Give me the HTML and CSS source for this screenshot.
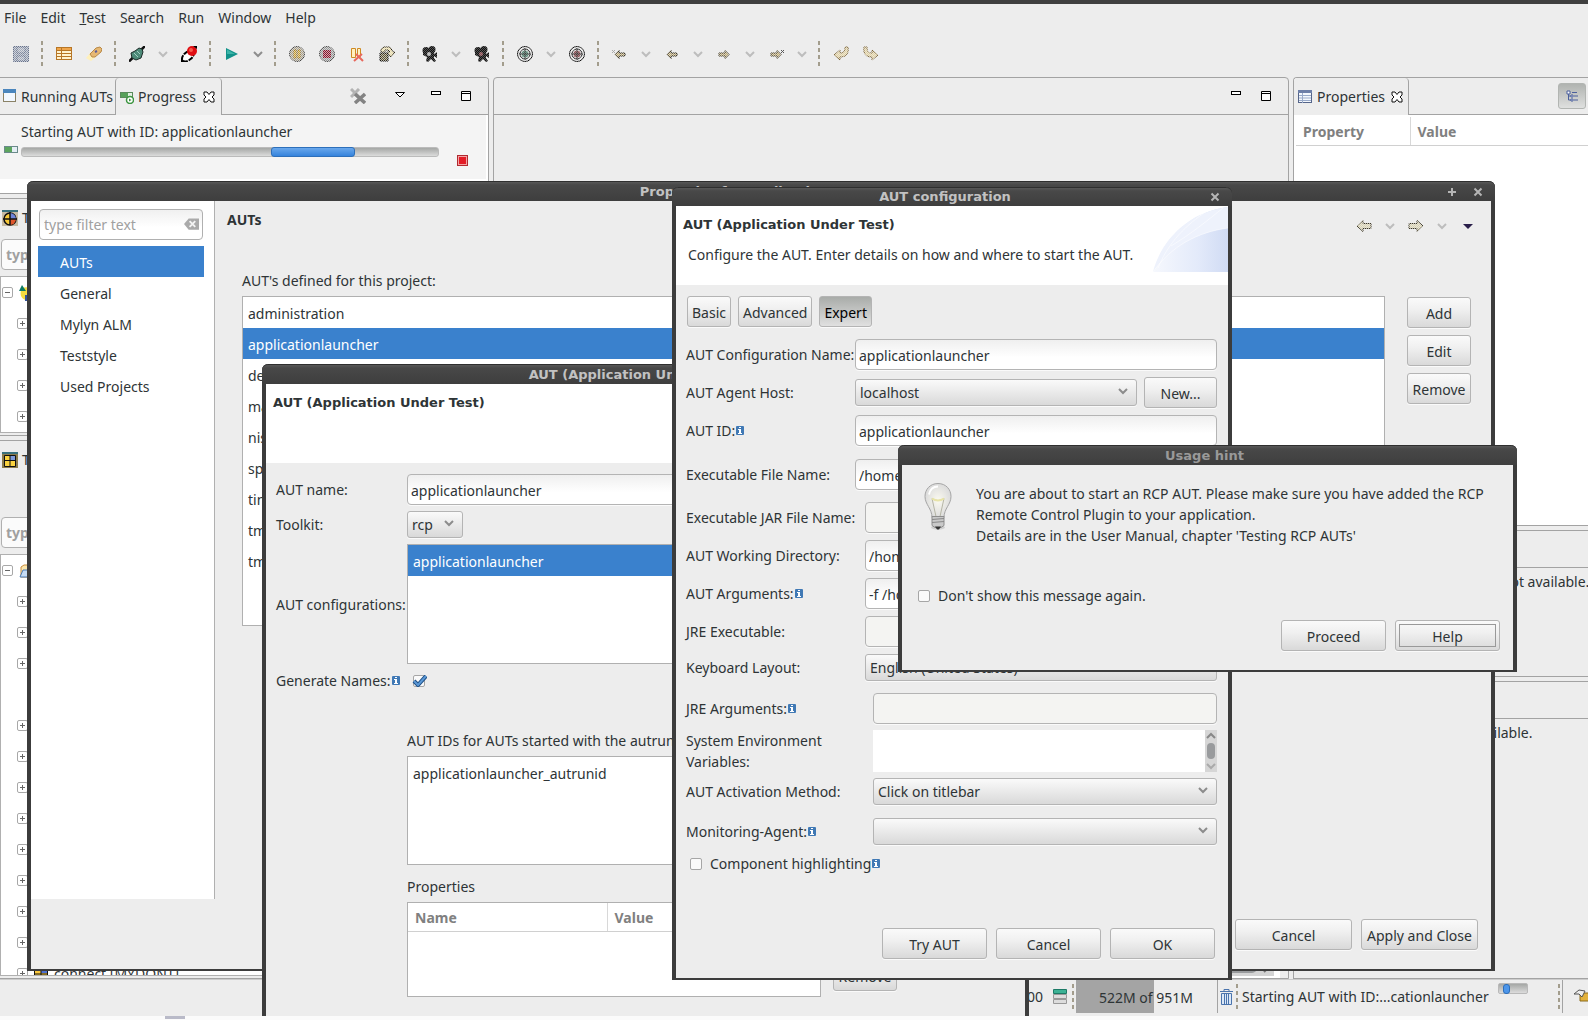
FILE: index.html
```html
<!DOCTYPE html>
<html lang="en">
<head>
<meta charset="utf-8">
<title>Test Workbench</title>
<link rel="stylesheet" href="styles.css">
</head>
<body>
<svg class="defs" aria-hidden="true">
  <symbol id="chev" viewBox="0 0 10 7"><path d="M1 1l4 4 4-4" fill="none" stroke="currentColor" stroke-width="2"/></symbol>
  <symbol id="info" viewBox="0 0 8 9"><rect width="8" height="9" rx="1" fill="#4079b5"/><path d="M3 1h2v1H3zM2 3h3v4h1v1H2V7h1V4H2z" fill="#fff"/></symbol>
  <symbol id="closetab" viewBox="0 0 12 12"><path d="M1 1h3l2 2.500 2-2.500h3v3L9 6l2 2v3H8L6 8.500 4 11H1V8l2-2-2-2z" fill="#fff" stroke="#111"/></symbol>
  <symbol id="minimize" viewBox="0 0 12 12"><rect x="1.500" y="1.500" width="9" height="3" fill="#fff" stroke="#000"/></symbol>
  <symbol id="maximize" viewBox="0 0 12 12"><path d="M1.500 1.500h9v9h-9zM1 3.500h10" fill="#fff" stroke="#000"/></symbol>
  <symbol id="plus" viewBox="0 0 11 11"><rect x=".5" y=".5" width="10" height="10" rx="1.500" fill="#fff" stroke="#a8a8a8"/><path d="M3 5.500h5M5.500 3v5" stroke="#666"/></symbol>
  <symbol id="minus" viewBox="0 0 11 11"><rect x=".5" y=".5" width="10" height="10" rx="1.500" fill="#fff" stroke="#a8a8a8"/><path d="M3 5.500h5" stroke="#666"/></symbol>
  <symbol id="arrowl" viewBox="0 0 16 16"><path d="M1 8l6-5.500v3h8v5H7v3z" fill="#d9d2b0" stroke="#3c3724"/></symbol>
  <symbol id="arrowr" viewBox="0 0 16 16"><path d="M15 8L9 2.500v3H1v5h8v3z" fill="#d9d2b0" stroke="#3c3724"/></symbol>
  <symbol id="sarrowl" viewBox="0 0 16 16"><path d="M3 8.500l4-4v2.500h6v3H7v2.500z" fill="#b9a46c" stroke="#1e1a0e"/></symbol>
  <symbol id="sarrowr" viewBox="0 0 16 16"><path d="M13 8.500l-4-4v2.500H3v3h6v2.500z" fill="#b9a46c" stroke="#3c3420"/></symbol>
  <symbol id="camera" viewBox="0 0 16 16"><circle cx="4" cy="4.500" r="3.500" fill="#111"/><circle cx="10" cy="3.500" r="3.500" fill="#111"/><path d="M1 6h11v2l3-2v6l-3-2v2l2 3-2 1-3-3-3 3-2-1 1-4-4-2z" fill="#111"/><circle cx="7" cy="8" r="2" fill="currentColor"/></symbol>
  <symbol id="target" viewBox="0 0 16 16"><g fill="none" stroke="#111"><circle cx="8" cy="8" r="7.500"/><circle cx="8" cy="8" r="5"/></g><circle cx="8" cy="8" r="3.500" fill="currentColor"/><path d="M8 2v12M2 8h12" stroke="#333"/></symbol>
  <symbol id="wclose" viewBox="0 0 10 10"><path d="M1.500 1.500l7 7M8.500 1.500l-7 7" stroke="#b5b5b5" stroke-width="2"/></symbol>
</svg>

<div class="desktop">
  <div class="app-edge"></div>
  <nav class="menubar">
    <a href="#">File</a><a href="#">Edit</a><a href="#"><u>T</u>est</a><a href="#">Search</a><a href="#">Run</a><a href="#">Window</a><a href="#">Help</a>
  </nav>
  <div class="toolbar">
    <button class="tool dither" aria-label="Save"><svg viewBox="0 0 16 16"><path d="M.5.500h15v15H.5z" fill="#8f99ad" stroke="#67738d"/><path d="M4 1h8v6H4zM4 10h8v5H4z" fill="#a3abbb" stroke="#67738d"/></svg></button>
    <i class="sep"></i>
    <button class="tool" aria-label="Table"><svg viewBox="0 0 16 16"><rect x=".5" y="1.500" width="15" height="12" fill="#fff3cf" stroke="#b77626"/><path d="M1 2h14v2H1z" fill="#f0a54a"/><path d="M1 4.500h14M1 7.500h14M1 10.500h14M5.500 2v11" stroke="#b77626"/></svg></button>
    <button class="tool" aria-label="Search"><svg viewBox="0 0 16 16"><path d="M0 12l5-6 5 5-5 4z" fill="#fff0ba"/><path d="M4 8l6-6 4-1 2 2-1 3-6 5H6z" fill="#e6b873" stroke="#b98947"/><path d="M9 6l2-1" stroke="#5b5b9a" stroke-width="2"/></svg></button>
    <i class="sep"></i>
    <button class="tool" aria-label="Connect"><svg viewBox="0 0 16 16"><path d="M0 15.500l4-4M12 4l4-4" stroke="#111" stroke-width="2.500"/><path d="M2 7l4-2 4-3 3 1 1 3-2 6-5 2-4-2z" fill="#4d8a78" stroke="#1d2b28"/><path d="M5 7l4 4M8 5l3 3" stroke="#a2cfc2"/></svg></button>
    <button class="drop" aria-label="Connect options"><svg viewBox="0 0 10 7"><use href="#chev"/></svg></button>
    <button class="tool" aria-label="Record"><svg viewBox="0 0 16 16"><ellipse cx="7" cy="10" rx="7" ry="4" transform="rotate(-40 7 10)" fill="#fff" stroke="#000" stroke-width="2" stroke-dasharray="5 1"/><circle cx="11" cy="5" r="5" fill="#e00d12"/><circle cx="10" cy="4" r="2" fill="#f65a4c"/><path d="M12 0h4v3zM0 12v4h4z" fill="#000"/></svg></button>
    <i class="sep"></i>
    <button class="tool" aria-label="Start"><svg viewBox="0 0 16 16"><path d="M2 2l12 6-12 6z" fill="#12928a"/><path d="M3 3.500L11 8H3z" fill="#3db5a8"/></svg></button>
    <button class="drop on" aria-label="Start options"><svg viewBox="0 0 10 7"><use href="#chev"/></svg></button>
    <i class="sep"></i>
    <button class="tool dither" aria-label="Pause"><svg viewBox="0 0 16 16"><circle cx="8" cy="8" r="7.500" fill="#a9a18c" stroke="#444"/><path d="M5 4h2v8H5zM9 4h2v8H9z" fill="#f3c33c" stroke="#9a7112"/></svg></button>
    <button class="tool dither" aria-label="Stop"><svg viewBox="0 0 16 16"><circle cx="8" cy="8" r="7.500" fill="#999" stroke="#444"/><rect x="4" y="4" width="8" height="8" fill="#8a1029"/></svg></button>
    <button class="tool" aria-label="Pause on error"><svg viewBox="0 0 16 16"><path d="M2.500 2.500h4v9h-4zM8.500 2.500h3v8h-3z" fill="#fff0c0" stroke="#cf8a22"/><path d="M5 15l8-7M7 8l7 7" stroke="#e8685d" stroke-width="2"/></svg></button>
    <button class="tool dither" aria-label="Import"><svg viewBox="0 0 16 16"><path d="M1 7h8v8H1z" fill="#5d5230" stroke="#000"/><path d="M2 6V3l3-2h6l3 5h2l-4 5-4-5h3L9 4H6v2z" fill="#eee0a8" stroke="#2c2512"/></svg></button>
    <i class="sep"></i>
    <button class="tool dither-soft cam-a" aria-label="Observe"><svg><use href="#camera"/></svg></button>
    <button class="drop" aria-label="Observe options"><svg viewBox="0 0 10 7"><use href="#chev"/></svg></button>
    <button class="tool dither-soft cam-b" aria-label="Stop observing"><svg><use href="#camera"/></svg></button>
    <i class="sep"></i>
    <button class="tool dither-soft cam-c" aria-label="Map"><svg><use href="#target"/></svg></button>
    <button class="drop" aria-label="Map options"><svg viewBox="0 0 10 7"><use href="#chev"/></svg></button>
    <button class="tool dither-soft cam-b" aria-label="Stop mapping"><svg><use href="#target"/></svg></button>
    <i class="sep"></i>
    <button class="tool dither" aria-label="Last edit"><svg viewBox="0 0 16 16"><use href="#sarrowl"/><path d="M0 4l3 3M3 4L0 7" stroke="#111"/></svg></button>
    <button class="drop" aria-label="More"><svg viewBox="0 0 10 7"><use href="#chev"/></svg></button>
    <button class="tool dither" aria-label="Back"><svg><use href="#sarrowl"/></svg></button>
    <button class="drop" aria-label="Back history"><svg viewBox="0 0 10 7"><use href="#chev"/></svg></button>
    <button class="tool dither" aria-label="Forward"><svg><use href="#sarrowr"/></svg></button>
    <button class="drop" aria-label="Forward history"><svg viewBox="0 0 10 7"><use href="#chev"/></svg></button>
    <button class="tool dither" aria-label="Next edit"><svg viewBox="0 0 16 16"><use href="#sarrowr"/><path d="M13 4l3 3M16 4l-3 3" stroke="#555"/></svg></button>
    <button class="drop" aria-label="More"><svg viewBox="0 0 10 7"><use href="#chev"/></svg></button>
    <i class="sep"></i>
    <button class="tool dither" aria-label="Undo"><svg viewBox="0 0 16 16"><path d="M1 9l6-5v3c4 0 5-2 5-6h3c1 7-2 10-8 10v3z" fill="#e3d2a0" stroke="#7a6235"/></svg></button>
    <button class="tool dither" aria-label="Redo"><svg viewBox="0 0 16 16"><path d="M15 9L9 4v3C5 7 4 5 4 1H1c-1 7 2 10 8 10v3z" fill="#e3d2a0" stroke="#7a6235"/></svg></button>
  </div>

  <main class="workbench">
    <div class="col left">
      <section class="panel p-progress">
        <header class="tabs">
          <button class="tab"><svg viewBox="0 0 14 14"><rect x=".5" y=".5" width="12" height="12" fill="#f2f8ff" stroke="#8b8266"/><path d="M0 0h13v4H0z" fill="#4b86bd"/></svg>Running AUTs</button>
          <button class="tab active"><svg viewBox="0 0 14 14"><rect x=".5" y="2.500" width="12" height="5" fill="#e2f0e2" stroke="#5a8a5c"/><path d="M1 3h7v4H1z" fill="#57a05a"/><circle cx="10" cy="10" r="3.500" fill="#fff" stroke="#3c9440" stroke-width="1.500"/><path d="M9 8.500v3l2.500-1.500z" fill="#3c9440"/></svg>Progress<svg class="x" viewBox="0 0 12 12"><use href="#closetab"/></svg></button>
          <div class="tab-tools">
            <svg class="t16" viewBox="0 0 16 16"><path d="M1 1l8 8M9 1L1 9" stroke="#b3b3b3" stroke-width="3"/><path d="M5 6l10 9M15 6L5 15" stroke="#838383" stroke-width="3.500"/></svg>
            <svg class="t12" viewBox="0 0 12 12"><path d="M1.500 2.500h9L6 7z" fill="#fff" stroke="#000"/></svg>
            <svg class="t12"><use href="#minimize"/></svg>
            <svg class="t12"><use href="#maximize"/></svg>
          </div>
        </header>
        <div class="job">
          <svg class="job-icon" viewBox="0 0 14 7"><rect x=".5" y=".5" width="13" height="6" fill="#e4eef4" stroke="#6a8a8a"/><path d="M1 1h7v5H1z" fill="#5ca55e"/></svg>
          <div class="job-main">
            <div class="job-name">Starting AUT with ID: applicationlauncher</div>
            <div class="meter"><i></i></div>
          </div>
          <button class="job-stop" aria-label="Stop job"></button>
        </div>
      </section>
      <section class="panel p-suites">
        <header class="tabs plain"><svg viewBox="0 0 16 16"><path d="M0 0h16v16H0z" fill="#c7bba4"/><path d="M0 0h16v2H0z" fill="#39707c"/><circle cx="8" cy="9" r="6" fill="#f7c93a" stroke="#111" stroke-width="1.500"/><path d="M8 3a6 6 0 0 1 6 6H8z" fill="#6f84d8"/><path d="M8 15a6 6 0 0 0 6-6H8z" fill="#e0572c"/><path d="M8 2v13M1 9h14" stroke="#111" stroke-width="1.500"/></svg>Test Suite Browser</header>
        <input class="filter" type="text" placeholder="type filter text" aria-label="Filter test suites">
        <ul class="tree">
          <li class="root"><svg class="pm"><use href="#minus"/></svg><svg class="t16" viewBox="0 0 16 16"><path d="M4 3c6-2 10 0 10 6 0 4-3 6-6 6-5-1-7-6-4-12z" fill="#f6dd41"/><path d="M1 6l3-6 4 6z" fill="#0c7a64"/><path d="M7 10h9v6H7z" fill="#35549b"/></svg></li>
          <li><svg class="pm"><use href="#plus"/></svg></li><li><svg class="pm"><use href="#plus"/></svg></li><li><svg class="pm"><use href="#plus"/></svg></li><li><svg class="pm"><use href="#plus"/></svg></li>
        </ul>
      </section>
      <section class="panel p-cases">
        <header class="tabs plain"><svg viewBox="0 0 16 16"><path d="M0 0h16v16H0z" fill="#8b7c4c"/><path d="M0 0h16v2H0z" fill="#39707c"/><path d="M2.500 3.500h11v11h-11z" fill="#fbd33f" stroke="#111"/><path d="M8 4h5v4H8z" fill="#7d9ad9"/><path d="M8 3v12M2 8.500h12" stroke="#111"/></svg>Test Case Browser</header>
        <input class="filter" type="text" placeholder="type filter text" aria-label="Filter test cases">
        <ul class="tree">
          <li class="root"><svg class="pm"><use href="#minus"/></svg><svg class="t16" viewBox="0 0 16 16"><path d="M3 4l3-2h8v12H3z" fill="#fce7ae" stroke="#c98d3d"/><path d="M2 14l3-7h11l-3 7z" fill="#c6dcf5" stroke="#4c7cb8"/></svg></li>
          <li><svg class="pm"><use href="#plus"/></svg></li><li><svg class="pm"><use href="#plus"/></svg></li><li><svg class="pm"><use href="#plus"/></svg></li><li></li>
          <li><svg class="pm"><use href="#plus"/></svg></li><li><svg class="pm"><use href="#plus"/></svg></li><li><svg class="pm"><use href="#plus"/></svg></li><li><svg class="pm"><use href="#plus"/></svg></li>
          <li><svg class="pm"><use href="#plus"/></svg></li><li><svg class="pm"><use href="#plus"/></svg></li><li><svg class="pm"><use href="#plus"/></svg></li><li><svg class="pm"><use href="#plus"/></svg></li>
          <li><svg class="pm"><use href="#plus"/></svg><svg class="t16" viewBox="0 0 16 16"><path d="M1.500 1.500h13v13h-13z" fill="#fbc93f" stroke="#111"/><path d="M8 2h6v5H8z" fill="#4c6fd0"/><path d="M8 1v14M1 8h14" stroke="#111"/></svg>connect [MYDONT]</li>
        </ul>
      </section>
    </div>

    <section class="panel editor">
      <header class="tabs"><div class="tab-tools"><svg class="t12"><use href="#minimize"/></svg><svg class="t12"><use href="#maximize"/></svg></div></header>
      <div class="editor-body"></div>
      <div class="hscroll"><i></i><svg viewBox="0 0 7 10"><path d="M1 1l4 4-4 4" fill="none" stroke="#777" stroke-width="2"/></svg></div>
    </section>

    <div class="col right">
      <section class="panel p-props">
        <header class="tabs">
          <button class="tab active"><svg viewBox="0 0 14 14"><rect x=".5" y=".5" width="13" height="12" fill="#f4f8fd" stroke="#55658a"/><path d="M0 0h14v3H0z" fill="#6d7fa8"/><path d="M4.500 3v10M1 5.500h12M1 8h12M1 10.500h12" stroke="#9aabca"/></svg>Properties<svg class="x" viewBox="0 0 12 12"><use href="#closetab"/></svg></button>
          <div class="tab-tools"><button class="toggle" aria-label="Show categories"><svg viewBox="0 0 12 12"><path d="M1 1h3v3H1zM5 5h2v2H5zM5 9h2v2H5z" fill="#fff" stroke="#4a5f9c"/><path d="M2.500 4v6H5M2.500 6H5M6 2.500h5M8 6h4M8 10h4" fill="none" stroke="#4a5f9c"/></svg></button></div>
        </header>
        <table class="grid"><thead><tr><th class="c-prop">Property</th><th>Value</th></tr></thead></table>
      </section>
      <section class="panel p-outline"><header class="tabs"></header><p>An outline is not available.</p></section>
      <section class="panel p-image"><header class="tabs"></header><p>An image is not available.</p></section>
    </div>
  </main>

  <footer class="status">
    <span class="grow">GEN 00</span>
    <svg class="s-bars" viewBox="0 0 14 15"><path d="M.5.500h13v4H.5z" fill="#3cb295" stroke="#1d7a66"/><path d="M.5 5.500h13v4H.5zM.5 10.500h13v4H.5z" fill="#ddd" stroke="#999"/></svg>
    <i class="sep"></i>
    <span class="heap">522M of 951M</span>
    <button class="trash" aria-label="Run garbage collector"><svg viewBox="0 0 13 16"><path d="M0 2.500h13M4 2V.5h5V2" fill="none" stroke="#4a74ad"/><path d="M1.500 4.500h10v11h-10z" fill="#dbe8f7" stroke="#4a74ad"/><path d="M4.500 5v10M6.500 5v10M8.500 5v10" stroke="#4a74ad"/></svg></button>
    <i class="sep"></i>
    <span class="s-job">Starting AUT with ID:...cationlauncher</span>
    <div class="mini"><i></i></div>
    <i class="sep far"></i>
    <button class="s-end" aria-label="Show progress"><svg viewBox="0 0 16 16"><path d="M7 7h9v8H7z" fill="#e2b13c" stroke="#8a6a1c"/><path d="M1 8l5-4 6 1-3 6-3-3z" fill="#eee" stroke="#555"/></svg></button>
  </footer>

  <!-- Project properties -->
  <section class="win w-props">
    <header class="titlebar"><span>Properties for application</span>
      <button class="wbtn" aria-label="Maximize"><svg viewBox="0 0 10 10"><path d="M5 1v8M1 5h8" stroke="#b5b5b5" stroke-width="2"/></svg></button>
      <button class="wbtn" aria-label="Close"><svg><use href="#wclose"/></svg></button></header>
    <div class="props-main">
      <aside class="side">
        <div class="search"><input class="filter" type="text" placeholder="type filter text" aria-label="Filter pages"><svg viewBox="0 0 16 12"><path d="M0 6l5-6h11v12H5z" fill="#aaa"/><path d="M6 3l6 6M12 3L6 9" stroke="#f4f4f4" stroke-width="2"/></svg></div>
        <ul class="list"><li class="sel">AUTs</li><li>General</li><li>Mylyn ALM</li><li>Teststyle</li><li>Used Projects</li></ul>
      </aside>
      <div class="page">
        <div class="page-head"><h2>AUTs</h2>
          <div class="nav">
            <button class="tool dither" aria-label="Back"><svg><use href="#arrowl"/></svg></button>
            <button class="drop" aria-label="Back history"><svg viewBox="0 0 10 7"><use href="#chev"/></svg></button>
            <button class="tool dither" aria-label="Forward"><svg><use href="#arrowr"/></svg></button>
            <button class="drop" aria-label="Forward history"><svg viewBox="0 0 10 7"><use href="#chev"/></svg></button>
            <button class="tool" aria-label="Menu"><svg viewBox="0 0 16 16"><path d="M3 6h10l-5 5z" fill="#2a1f4a"/></svg></button>
          </div></div>
        <div class="page-label">AUT's defined for this project:</div>
        <div class="page-row">
          <ul class="list box"><li>administration</li><li class="sel">applicationlauncher</li><li>dev</li><li>main</li><li>nis</li><li>sp</li><li>time</li><li>tm</li><li>tm</li></ul>
          <div class="stack"><button class="btn">Add</button><button class="btn">Edit</button><button class="btn">Remove</button></div>
        </div>
      </div>
    </div>
    <div class="actions"><button class="btn">Cancel</button><button class="btn">Apply and Close</button></div>
  </section>

  <!-- AUT editor -->
  <section class="win w-aut">
    <header class="titlebar"><span>AUT (Application Under Test)</span><i class="slot"></i></header>
    <div class="banner"><h1>AUT (Application Under Test)</h1></div>
    <div class="aut-form">
      <label for="aut-name">AUT name:</label><input id="aut-name" class="field" type="text" value="applicationlauncher">
      <label for="toolkit">Toolkit:</label><div class="combo small"><select id="toolkit"><option>rcp</option></select><svg viewBox="0 0 10 7"><use href="#chev"/></svg></div>
      <span>AUT configurations:</span><ul class="list box configs"><li class="sel">applicationlauncher</li></ul>
      <label for="gen">Generate Names:<svg class="info"><use href="#info"/></svg></label><div class="gen"><input id="gen" type="checkbox" checked><svg viewBox="0 0 15 12"><path d="M2 6l4 4 8-9" fill="none" stroke="#1d4f86" stroke-width="4"/><path d="M2 6l4 4 8-9" fill="none" stroke="#5b98d6" stroke-width="2"/></svg></div>
      <div class="sub">
        <div class="sub-title">AUT IDs for AUTs started with the autrun command:</div>
        <ul class="list box ids"><li>applicationlauncher_autrunid</li></ul>
        <div class="sub-title second">Properties</div>
        <div class="sub-row">
          <div class="tbl"><table class="grid"><thead><tr><th class="c-name">Name</th><th>Value</th></tr></thead></table></div>
          <button class="btn">Remove</button>
        </div>
      </div>
    </div>
  </section>

  <!-- AUT configuration -->
  <section class="win w-config">
    <header class="titlebar"><span>AUT configuration</span><button class="wbtn" aria-label="Close"><svg><use href="#wclose"/></svg></button></header>
    <div class="banner">
      <h1>AUT (Application Under Test)</h1>
      <p>Configure the AUT. Enter details on how and where to start the AUT.</p>
      <svg class="swoosh" viewBox="0 0 75 66"><defs><linearGradient id="sw"><stop offset="0" stop-color="#f6f8fd"/><stop offset=".6" stop-color="#e3eafa"/><stop offset="1" stop-color="#d0dbf4"/></linearGradient></defs><path d="M0 66C8 35 35 6 75 1v65z" fill="url(#sw)"/><path d="M0 66C8 35 35 6 75 1v21C45 26 18 40 0 66z" fill="#eef2fc"/><path d="M0 66C18 40 45 26 75 22M5 62C18 30 40 15 55 4M18 40C38 28 55 14 70 2" fill="none" stroke="#fff" stroke-opacity=".5"/></svg>
    </div>
    <div class="cfg">
      <div class="modes"><button class="btn">Basic</button><button class="btn">Advanced</button><button class="btn pressed">Expert</button></div>
      <div class="rows first">
        <label for="c1">AUT Configuration Name:</label><input id="c1" class="field" type="text" value="applicationlauncher">
        <label for="c2">AUT Agent Host:</label><div class="host"><div class="combo"><select id="c2"><option>localhost</option></select><svg viewBox="0 0 10 7"><use href="#chev"/></svg></div><button class="btn">New...</button></div>
        <label for="c3">AUT ID:<svg class="info"><use href="#info"/></svg></label><input id="c3" class="field" type="text" value="applicationlauncher">
      </div>
      <div class="rows first tight">
        <label for="c4">Executable File Name:</label><input id="c4" class="field" type="text" value="/home/user/applicationlauncher">
      </div>
      <div class="rows second">
        <label for="c5">Executable JAR File Name:</label><input id="c5" class="field" type="text" disabled>
        <label for="c6">AUT Working Directory:</label><input id="c6" class="field" type="text" value="/home/user">
        <label for="c7">AUT Arguments:<svg class="info"><use href="#info"/></svg></label><input id="c7" class="field" type="text" value="-f /home/user">
        <label for="c8">JRE Executable:</label><input id="c8" class="field" type="text" disabled>
        <label for="c9">Keyboard Layout:</label><div class="combo"><select id="c9"><option>English (United States)</option></select><svg viewBox="0 0 10 7"><use href="#chev"/></svg></div>
      </div>
      <div class="rows third">
        <label for="c10">JRE Arguments:<svg class="info"><use href="#info"/></svg></label><input id="c10" class="field" type="text" disabled>
        <label for="c11">System Environment<br>Variables:</label><div class="area"><textarea id="c11"></textarea><div class="vscroll"><svg viewBox="0 0 10 7"><path d="M1 6l4-4 4 4" fill="none" stroke="#888" stroke-width="2"/></svg><i></i><svg viewBox="0 0 10 7"><use href="#chev"/></svg></div></div>
        <label for="c12">AUT Activation Method:</label><div class="combo"><select id="c12"><option>Click on titlebar</option></select><svg viewBox="0 0 10 7"><use href="#chev"/></svg></div>
      </div>
      <div class="rows third last">
        <label for="c13">Monitoring-Agent:<svg class="info"><use href="#info"/></svg></label><div class="combo"><select id="c13"><option></option></select><svg viewBox="0 0 10 7"><use href="#chev"/></svg></div>
      </div>
      <label class="check"><input type="checkbox"><span>Component highlighting</span><svg class="info"><use href="#info"/></svg></label>
      <div class="actions"><button class="btn">Try AUT</button><button class="btn">Cancel</button><button class="btn">OK</button></div>
    </div>
  </section>

  <!-- Usage hint -->
  <section class="win w-hint">
    <header class="titlebar"><span>Usage hint</span></header>
    <div class="hint-body">
      <svg class="bulb" viewBox="0 0 28 48"><defs><radialGradient id="bg" cx=".5" cy=".5"><stop offset="0" stop-color="#fbfaf0"/><stop offset="1" stop-color="#dcdcdc"/></radialGradient></defs><ellipse cx="14" cy="45" rx="7" ry="2" fill="#cfcfcf"/><path d="M14 1C6 1 1 7 1 14c0 8 7 12 7 21h12c0-9 7-13 7-21C27 7 22 1 14 1z" fill="url(#bg)" stroke="#a5a5a5"/><path d="M5 12c1-5 4-8 9-8" fill="none" stroke="#fff" stroke-width="2"/><path d="M12 34L8 16q6 4 12 0l-4 18" fill="none" stroke="#b5b5a5"/><path d="M8 16q6 4 12 0" fill="none" stroke="#e8e4a8" stroke-width="2"/><path d="M8 34h12v9l-3 2h-6l-3-2z" fill="#c9c9c9" stroke="#8d8d8d"/><path d="M8 37l12-1M8 40l12-1" stroke="#888"/><path d="M11 44h6l-2 3h-2z" fill="#333"/></svg>
      <p>You are about to start an RCP AUT. Please make sure you have added the RCP<br>Remote Control Plugin to your application.<br>Details are in the User Manual, chapter 'Testing RCP AUTs'</p>
    </div>
    <label class="check"><input type="checkbox"><span>Don't show this message again.</span></label>
    <div class="actions"><button class="btn">Proceed</button><button class="btn focused">Help</button></div>
  </section>
</div>
<div class="below"><i></i></div>
</body>
</html>
```
FILE: styles.css
```css
* { box-sizing: border-box; }
html, body { margin: 0; height: 100%; }
body { display: flex; flex-direction: column; background: #fbfbfb; color: #2e3436; font: 14px/21px "Noto Sans", "Open Sans", sans-serif; overflow: hidden; }
button, input, select, textarea { font: inherit; color: inherit; margin: 0; }
h1, h2, p, ul { margin: 0; padding: 0; }
ul { list-style: none; }
.defs { position: absolute; width: 0; height: 0; }
.desktop { position: relative; flex: 1; min-height: 0; display: flex; flex-direction: column; background: #ededed; overflow: hidden; }
.below { height: 4px; padding-left: 165px; }
.below i { display: block; width: 20px; height: 3px; background: #b9bac8; }

.app-edge { height: 4px; background: #404040; }
.menubar { display: flex; height: 27px; align-items: center; gap: 14px; padding-left: 4px; }
.menubar a { color: inherit; text-decoration: none; }
.toolbar { display: flex; height: 46px; align-items: center; padding-left: 6px; }
.tool, .drop, .wbtn, .tab, .toggle, .trash, .s-end { border: 0; background: none; padding: 0; }
.tool { position: relative; width: 30px; height: 24px; display: flex; align-items: center; justify-content: center; }
.tool svg { width: 16px; height: 16px; }
.dither::after, .dither-soft::after { content: ""; position: absolute; inset: 0; background: conic-gradient(#ededed 25%, transparent 0 50%, #ededed 0 75%, transparent 0) 0 0 / 2px 2px; opacity: .7; }
.dither-soft::after { opacity: .3; }
.cam-a { color: #bbb; } .cam-b { color: #8d5257; } .cam-c { color: #5d8a78; }
.drop { width: 22px; height: 24px; display: flex; align-items: center; justify-content: center; color: #bdbdbd; }
.drop.on { color: #8e8e8e; }
.drop svg { width: 10px; height: 7px; }
.sep { width: 2px; height: 26px; margin: 0 6px 0 5px; background: repeating-linear-gradient(#a39d8d 0 4px, transparent 4px 7px); }

.workbench { flex: 1; min-height: 0; display: flex; gap: 4px; }
.col { display: flex; flex-direction: column; gap: 4px; min-height: 0; }
.left { width: 489px; }
.right { width: 295px; }
.panel { display: flex; flex-direction: column; border: 1px solid #a3a3a3; border-radius: 4px 4px 0 0; min-height: 0; overflow: hidden; }
.left .panel { border-left: 0; border-top-left-radius: 0; }
.right .panel { border-right: 0; border-top-right-radius: 0; }
.editor { flex: 1; }
.tabs { display: flex; flex: none; height: 37px; border-bottom: 1px solid #a3a3a3; }
.tabs.plain { border: 0; align-items: center; padding-left: 2px; gap: 4px; }
.tabs.plain svg { width: 16px; height: 16px; }
.tab { display: flex; align-items: center; gap: 4px; height: 36px; padding: 0 2px 0 3px; white-space: nowrap; }
.tab svg { width: 14px; height: 14px; flex: none; }
.tab svg.x { width: 12px; height: 12px; margin-left: 3px; }
.tab.active { height: 37px; border: 1px solid #a3a3a3; border-width: 0 1px; border-radius: 4px 4px 0 0; background: #ededed; padding: 0 6px 0 4px; }
.right .tab.active { border-left: 0; gap: 5px; padding-right: 5px; }
.right .tab svg.x { margin-left: 1px; }
.tab-tools { margin-left: auto; display: flex; align-items: center; gap: 18px; padding-right: 16px; }
.t16 { width: 16px; height: 16px; flex: none; } .t12 { width: 12px; height: 12px; }
.tab-tools .t16 { margin-right: 10px; }
.left .tab-tools .t12:nth-child(2) { margin-right: 6px; }
.tab-tools .t12 { margin-bottom: 1px; }
.toggle { width: 28px; height: 26px; border: 1px solid #b2b5b2; border-radius: 3px; background: linear-gradient(#b0b3b0, #dfe0df); display: grid; place-items: center; }
.right .tab-tools { padding-right: 2px; }
.toggle svg { width: 12px; height: 12px; }

.p-progress { height: 117px; background: #fff; }
.p-progress .tabs, .p-props .tabs { background: #ededed; }
.job { display: flex; height: 64px; padding: 6px 0 0 4px; gap: 3px; background: #f4f4f4; margin-right: 2px; }
.job-icon { width: 14px; height: 7px; margin-top: 25px; }
.job-main { flex: 1; }
.meter { height: 10px; margin-top: 5px; background: linear-gradient(#a5a7a5, #dcdcdc); border: 1px solid #bbb; border-radius: 3px; padding-left: 249px; }
.meter i { display: block; width: 84px; height: 10px; margin-top: -1px; border: 1px solid #2d6fba; border-radius: 3px; background: linear-gradient(#6aa8ec, #3583dc); }
.job-stop { width: 11px; height: 11px; margin: 34px 18px 0 15px; padding: 0; border: 1px solid #b02a30; outline: 1px solid #f4a4a4; outline-offset: -2px; background: #e31b26; }
.filter { width: 100%; height: 31px; border: 1px solid #b0b0b0; border-radius: 4px; padding: 0 4px; background: linear-gradient(#f0f0f0, #fff 60%); }
.filter::placeholder { color: #a0a0a0; opacity: 1; }
.left .filter { width: auto; flex: none; margin: 3px 1px 0; background: #fbfbfb; font-weight: bold; }
.p-suites { height: 238px; }
.p-cases { flex: 1; }
.left .p-cases .filter { margin-top: 39px; }
.tree { flex: 1; min-height: 0; overflow: hidden; margin: 6px 2px 2px 0; border: 1px solid #b0b0b0; background: #fff; }
.tree li { display: flex; align-items: center; gap: 5px; height: 31px; padding-left: 16px; }
.tree .root { padding-left: 1px; }
.tree .pm { width: 11px; height: 11px; flex: none; }
.editor-body { flex: 1; }
.hscroll { display: flex; align-items: center; height: 16px; margin: 0 14px 2px 2px; background: #d4d4d4; outline: 6px solid #fff; }
.hscroll i { flex: 1; height: 10px; margin: 0 6px 0 12px; border-radius: 5px; background: #999b9d; }
.hscroll svg { width: 7px; height: 10px; margin-right: 4px; }
.p-props { height: 449px; background: #fff; }
.grid { width: 100%; border-collapse: collapse; color: #808080; }
.grid th { height: 28px; padding: 1px 7px 0; text-align: left; font-weight: bold; border-bottom: 1px solid #d0d0d0; }
.p-props .grid { margin: 2px 0 0 2px; }
.c-prop, .c-name { border-right: 1px solid #d8d8d8; }
.c-prop { width: 114px; }
.c-name { width: 199px; }
.p-outline { height: 147px; }
.p-outline p { padding: 3px 0 0 123px; white-space: nowrap; }
.p-image { flex: 1; }
.p-image p { padding: 3px 0 0 71px; }

.status { display: flex; flex: none; height: 37px; align-items: center; padding-bottom: 3px; border-top: 1px solid #ccc; white-space: nowrap; }
.grow { width: 1043px; text-align: right; }
.s-bars { width: 14px; height: 15px; margin-left: 10px; }
.heap { align-self: stretch; width: 142px; margin-left: -4px; padding: 7px 0 0 23px; border-right: 1px solid #a3a3a3; background: linear-gradient(90deg, #a4a4a4 55%, #ededed 55%); }
.trash { width: 16px; display: grid; place-items: center; }
.trash svg { width: 13px; height: 16px; }
.status .trash + .sep { margin: 0 4px 0 2px; }
.s-job { width: 256px; }
.mini { width: 30px; height: 11px; margin-bottom: 16px; border: 1px solid #b9b9b9; border-radius: 2px; background: linear-gradient(#a5a7a5, #dcdcdc); }
.mini i { display: block; width: 7px; height: 10px; margin-left: 4px; border: 1px solid #2d6fba; border-radius: 3px; background: #4d96ea; }
.status .far { margin: 0 2px 0 auto; }
.s-end { align-self: stretch; width: 26px; border-left: 1px solid #a3a3a3; padding-left: 10px; overflow: hidden; }
.s-end svg { width: 16px; height: 16px; }

.win { position: absolute; display: flex; flex-direction: column; background: #ededed; border: solid #3c3c3c; border-width: 0 4px 2px; border-radius: 6px 6px 0 0; }
.titlebar { display: flex; flex: none; height: 20px; margin: 0 -4px; align-items: center; gap: 16px; padding: 0 10px; border-radius: 6px 6px 0 0; border-top: 1px solid #2f2f2f; background: linear-gradient(#585858, #484848 3px, #3e3e3e); color: #c2c2c2; font: bold 13px/18px "DejaVu Sans", sans-serif; }
.titlebar span { flex: 1; text-align: center; }
.wbtn, .slot { width: 10px; height: 10px; display: block; }
.wbtn svg { display: block; width: 10px; height: 10px; }
h1 { font: bold 13px/18px "DejaVu Sans", sans-serif; }
h2 { font-size: 14px; line-height: 21px; }
.btn { height: 31px; padding: 1px 0 0; border: 1px solid #b4b4b4; border-radius: 3px; background: linear-gradient(#fafafa, #f0f0f0 40%, #d9d9d9); box-shadow: 0 1px #fafafa; white-space: nowrap; }
.btn.pressed { background: linear-gradient(#a9aca9, #e0e0e0); color: #000; }
.btn.focused { outline: 1px solid #999; outline-offset: -5px; }
.field { width: 100%; height: 31px; border: 1px solid #b4b4b4; border-radius: 4px; padding: 1px 4px 0 3px; background: linear-gradient(#efefef, #fff 60%); box-shadow: 0 1px #fafafa; }
.field:disabled { background: #f4f4f2; }
.combo { position: relative; height: 27px; }
.combo select { width: 100%; height: 27px; appearance: none; border: 1px solid #b4b4b4; border-radius: 3px; padding: 0 24px 0 4px; background: linear-gradient(#fafafa, #ededed 40%, #d9d9d9); box-shadow: 0 1px #fafafa; }
.combo svg { position: absolute; right: 9px; top: 9px; width: 10px; height: 7px; color: #8c8c8c; pointer-events: none; }
.list li { height: 31px; padding: 6px 5px 4px; line-height: 21px; }
.list .sel { background: #3a81cd; color: #fff; }
.box { border: 1px solid #b0b0b0; background: #fff; overflow: hidden; }
.info { width: 8px; height: 9px; margin-left: 1px; vertical-align: 1px; }
.actions { display: flex; justify-content: flex-end; }
.banner { position: relative; flex: none; height: 79px; background: #fff; padding: 10px 7px; }
.banner p { padding: 10px 0 0 5px; }
.swoosh { position: absolute; right: 0; top: 0; width: 75px; height: 66px; }
input[type="checkbox"] { appearance: none; width: 12px; height: 12px; border: 1px solid #a6a6a6; border-radius: 2px; background: #fafafa; flex: none; }
.check { display: flex; align-items: center; gap: 8px; }

.w-props { left: 27px; top: 181px; width: 1468px; height: 790px; }
.w-props .titlebar { padding-right: 12px; }
.props-main { display: flex; height: 698px; }
.side { width: 184px; padding: 8px 10px 0 7px; background: #fff; border-right: 1px solid #b0b0b0; }
.search { position: relative; padding: 0 1px; }
.search svg { position: absolute; right: 5px; top: 9px; width: 15px; height: 12px; }
.side .list { margin-top: 6px; }
.side .list li { padding-left: 22px; }
.page { flex: 1; padding: 8px 20px 0 27px; }
.page-head { display: flex; justify-content: space-between; height: 50px; margin-left: -15px; }
.nav { display: flex; margin: 5px -12px 0 0; }
.page-label { margin-top: 11px; }
.page-row { display: flex; gap: 22px; margin-top: 5px; }
.page-row .box { flex: 1; height: 330px; }
.stack { display: flex; flex-direction: column; gap: 7px; width: 64px; padding-top: 1px; }
.w-props .actions { gap: 9px; padding: 20px 13px 0 0; }
.w-props .actions .btn { width: 117px; }

.w-aut { left: 262px; top: 364px; width: 767px; bottom: -60px; }
.w-aut .titlebar { padding: 0 4px 0 8px; }
.aut-form { display: grid; grid-template-columns: 131px 1fr; grid-template-rows: 31px 27px 120px auto; row-gap: 6px; align-items: center; padding: 11px 8px 0 10px; }
.combo.small { width: 56px; }
.combo.small select { padding-right: 0; }
.configs { height: 120px; }
.gen { position: relative; display: flex; padding-left: 6px; }
.gen svg { position: absolute; left: 5px; top: 0; width: 15px; height: 12px; }
.sub { grid-column: 2; padding-top: 33px; }
.sub-title { white-space: nowrap; }
.ids { height: 109px; margin-top: 5px; }
.second { margin-top: 11px; }
.sub-row { display: flex; align-items: flex-start; gap: 12px; margin-top: 5px; }
.tbl { width: 414px; height: 95px; border: 1px solid #b0b0b0; background: #fff; }
.sub-row .btn { width: 64px; margin-top: 58px; }

.w-config { left: 672px; top: 187px; width: 560px; height: 793px; }
.w-config .titlebar { height: 19px; padding: 0 12px 0 24px; }
.cfg { padding: 11px 11px 0 10px; }
.modes { display: flex; gap: 7px; margin: 0 0 12px 1px; }
.modes .btn { padding: 1px 4px 0; }
.rows { display: grid; row-gap: 7px; align-items: center; margin-bottom: 13px; white-space: nowrap; }
.rows.first { grid-template-columns: 169px 1fr; }
.rows.tight { margin-bottom: 12px; }
.rows.second { grid-template-columns: 179px 1fr; margin-bottom: 12px; }
.rows.third { grid-template-columns: 187px 1fr; row-gap: 6px; }
.rows.last { margin-bottom: 8px; }
.host { display: flex; align-items: center; gap: 7px; }
.host .combo { flex: 1; }
.host .btn { width: 73px; }
.area { display: flex; height: 42px; background: #fff; }
.area textarea { flex: 1; min-width: 0; border: 0; resize: none; background: none; }
.vscroll { display: flex; flex-direction: column; align-items: center; justify-content: space-between; width: 12px; padding: 2px 0; background: #d6d6d6; color: #aaa; }
.vscroll svg { width: 10px; height: 7px; }
.vscroll i { width: 8px; height: 16px; border-radius: 4px; background: #999b9d; }
.w-config .check { padding-left: 4px; }
.w-config .check .info { margin: 0 0 0 -7px; }
.w-config .actions { gap: 9px; padding: 54px 2px 0 0; }
.w-config .actions .btn, .w-hint .actions .btn { width: 105px; }

.w-hint { left: 898px; top: 445px; width: 619px; height: 227px; }
.w-hint .titlebar { color: #999; padding-right: 16px; }
.hint-body { display: flex; gap: 24px; padding: 17px 0 0 22px; }
.bulb { width: 28px; height: 49px; }
.hint-body p { padding-top: 1px; white-space: nowrap; }
.w-hint .check { padding: 39px 0 0 16px; }
.w-hint .actions { gap: 9px; padding: 14px 13px 0 0; }
```
